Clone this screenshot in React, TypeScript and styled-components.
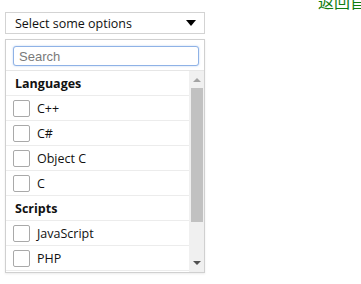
import React from "react";
import styled, { createGlobalStyle } from "styled-components";

const GlobalStyle = createGlobalStyle`
  html, body {
    margin: 0;
    padding: 0;
    background: #fff;
    overflow: hidden;
  }
  body {
    font-family: "Open Sans", "Noto Sans CJK SC", sans-serif;
  }
`;

const Page = styled.div`
  width: 361px;
  height: 284px;
  overflow: hidden;
`;

// 상단 링크
const TopBar = styled.div`
  height: 12px;
  display: flex;
  align-items: flex-end;
  padding-left: 318px;
  white-space: nowrap;
`;

const BackLink = styled.a`
  font-family: "Noto Sans CJK SC", sans-serif;
  font-size: 16px;
  line-height: 16px;
  color: #0f7d0f;
  text-decoration: none;
  margin-bottom: 3px;
`;

const Chooser = styled.div`
  margin-left: 5px;
  width: 200px;
`;

const SelectBox = styled.div`
  height: 20px;
  border: 1px solid #d3d3d3;
  background: #fff;
  display: flex;
  align-items: center;
  justify-content: space-between;
  padding: 0 8px 0 9px;
  font-size: 12.5px;
  color: #111;
`;

const Caret = styled.span`
  width: 0;
  height: 0;
  border-left: 5px solid transparent;
  border-right: 5px solid transparent;
  border-top: 6px solid #000;
`;

const Drop = styled.div`
  margin-top: 5px;
  height: 232px;
  border: 1px solid #d0d0d0;
  box-shadow: 0 1px 2px rgba(0, 0, 0, 0.08);
  background: #fff;
  display: flex;
  flex-direction: column;
`;

const SearchWrap = styled.div`
  padding: 6px 5px 4px 7px;
  border-bottom: 1px solid #e6e6e6;
`;

const SearchInput = styled.input`
  display: block;
  box-sizing: border-box;
  width: 186px;
  height: 20px;
  margin: 0;
  border: 1px solid #8fb2e6;
  border-radius: 3px;
  box-shadow: 0 0 2px rgba(110, 160, 230, 0.5);
  padding: 0 5px;
  font-family: "Liberation Sans", Arial, sans-serif;
  font-size: 13px;
  outline: none;
  &::placeholder {
    color: #7a7a7a;
  }
`;

const ListArea = styled.div`
  flex: 1;
  display: flex;
  overflow: hidden;
`;

const Options = styled.div`
  flex: 1;
  overflow: hidden;
`;

const Row = styled.div<{ $group?: boolean }>`
  height: 24px;
  border-bottom: 1px solid #ececec;
  display: flex;
  align-items: center;
  gap: 7px;
  padding-left: ${(p) => (p.$group ? "9px" : "7px")};
  font-size: 12.5px;
  font-weight: ${(p) => (p.$group ? 700 : 400)};
  color: #111;
`;

const Box = styled.span`
  width: 15px;
  height: 15px;
  border: 1px solid #a9a9a9;
  border-radius: 2px;
  background: #fff;
`;

// 스크롤바
const ScrollTrack = styled.div`
  width: 15px;
  background: #f0f0f0;
  display: flex;
  flex-direction: column;
`;

const ArrowBtn = styled.div`
  height: 17px;
  display: flex;
  align-items: center;
  justify-content: center;
`;

const Thumb = styled.div<{ $size: number }>`
  height: ${(p) => p.$size}px;
  margin: 0 1px 0 2px;
  background: #c1c1c1;
`;

const TrackRest = styled.div`
  flex: 1;
`;

const groups = [
  { name: "Languages", items: ["C++", "C#", "Object C", "C"] },
  { name: "Scripts", items: ["JavaScript", "PHP"] },
];

const App: React.FC = () => {
  return (
    <Page>
      <GlobalStyle />
      <TopBar>
        <BackLink href="#">返回首页</BackLink>
      </TopBar>
      <Chooser>
        <SelectBox>
          <span>Select some options</span>
          <Caret />
        </SelectBox>
        <Drop>
          <SearchWrap>
            <SearchInput placeholder="Search" />
          </SearchWrap>
          <ListArea>
            <Options>
              {groups.map((g) => (
                <React.Fragment key={g.name}>
                  <Row $group>{g.name}</Row>
                  {g.items.map((it) => (
                    <Row key={it}>
                      <Box />
                      {it}
                    </Row>
                  ))}
                </React.Fragment>
              ))}
            </Options>
            <ScrollTrack>
              <ArrowBtn>
                <svg width="8" height="5" viewBox="0 0 8 5">
                  <path d="M0 5 L4 1 L8 5 Z" fill="#a3a3a3" />
                </svg>
              </ArrowBtn>
              <Thumb $size={134} />
              <TrackRest />
              <ArrowBtn>
                <svg width="8" height="5" viewBox="0 0 8 5">
                  <path d="M0 0 L4 4 L8 0 Z" fill="#505050" />
                </svg>
              </ArrowBtn>
            </ScrollTrack>
          </ListArea>
        </Drop>
      </Chooser>
    </Page>
  );
};

export default App;
